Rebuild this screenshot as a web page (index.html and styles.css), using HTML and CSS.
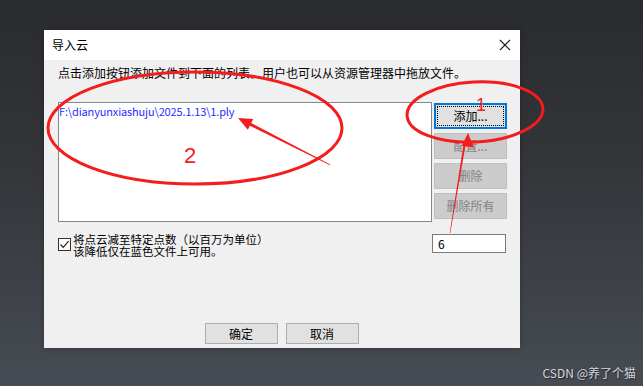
FILE: index.html
```html
<!DOCTYPE html>
<html lang="zh">
<head>
<meta charset="utf-8">
<title>导入云</title>
<link rel="stylesheet" href="styles.css">
</head>
<body>
<div class="page">
  <div class="dialog">
    <div class="titlebar">
      <span class="title">导入云</span>
      <svg class="close" width="12" height="12" viewBox="0 0 12 12"><path d="M1 1L11 11M11 1L1 11" stroke="#1a1a1a" stroke-width="1.1" fill="none"/></svg>
    </div>
    <div class="body">
      <p class="hint">点击添加按钮添加文件到下面的列表。用户也可以从资源管理器中拖放文件。</p>
      <div class="main">
        <div class="list"><div class="item">F:\dianyunxiashuju\2025.1.13\1.ply</div></div>
        <div class="btns">
          <div class="btn focus"><span>添加...</span></div>
          <div class="btn disabled">配置...</div>
          <div class="btn disabled">删除</div>
          <div class="btn disabled">删除所有</div>
        </div>
      </div>
      <div class="reduce">
        <div class="chk">
          <span class="box"><svg width="11" height="11" viewBox="0 0 11 11"><path d="M1.5 5.5L4.2 8.3L9.6 2.2" stroke="#222" stroke-width="1.2" fill="none"/></svg></span>
          <span class="txt"><span class="ln">将点云减至特定点数（以百万为单位）</span><span class="ln">该降低仅在蓝色文件上可用。</span></span>
        </div>
        <div class="num">6</div>
      </div>
      <div class="footer">
        <div class="btn normal">确定</div>
        <div class="btn normal">取消</div>
      </div>
    </div>
  </div>
  <div class="watermark">CSDN @养了个猫</div>
  <svg class="annot" width="643" height="386" viewBox="0 0 643 386">
    <ellipse cx="195" cy="128" rx="147" ry="56" fill="none" stroke="#f41c1c" stroke-width="3"/>
    <ellipse cx="475" cy="112" rx="68" ry="30" fill="none" stroke="#f41c1c" stroke-width="3" transform="rotate(-3 475 112)"/>
    <polygon points="238,118 247.8,129.8 249.8,125.8 330,165.2 330.3,164.6 251.2,123 253.2,119" fill="#f41c1c"/>
    <polygon points="468,133 461.9,145.5 465.3,146.2 450.3,233 449.7,233 463.3,145.9 473.8,147.4" fill="#f41c1c"/>
    <text x="476" y="111" class="num1">1</text>
    <text x="184" y="163" class="num2">2</text>
  </svg>
</div>
</body>
</html>
```

FILE: styles.css
```css
* { box-sizing: border-box; }
html, body { margin: 0; padding: 0; }
body {
  width: 643px;
  height: 386px;
  overflow: hidden;
  background: linear-gradient(180deg, #2a2b2e 0%, #34363a 45%, #474c54 100%);
  font-family: "Noto Sans CJK SC", "Noto Sans", sans-serif;
  font-size: 12px;
  color: #000;
}
.page {
  position: relative;
  width: 643px;
  height: 386px;
  padding: 30px 7px 0 44px;
  display: flex;
  flex-direction: column;
}
.dialog {
  width: 476px;
  height: 318px;
  display: flex;
  flex-direction: column;
  box-shadow: 0 0 6px rgba(0,0,0,0.25);
}
.titlebar {
  height: 30px;
  background: #fff;
  display: flex;
  align-items: center;
  justify-content: space-between;
  padding: 0 9px 0 8px;
}
.title { font-size: 12px; line-height: 14px; }
.close { display: block; }
.body {
  flex: 1;
  background: #f0f0f0;
  padding: 6px 13px 4px 14px;
  display: flex;
  flex-direction: column;
}
.hint { margin: 0; line-height: 14px; font-size: 12px; }
.main {
  margin-top: 22px;
  display: flex;
  gap: 2px;
}
.list {
  width: 374px;
  height: 120px;
  background: #fff;
  border: 1px solid #828790;
  padding: 0;
}
.item {
  color: #2a2aff;
  font-size: 11px;
  line-height: 16px;
  letter-spacing: -0.15px;
}
.btns {
  display: flex;
  flex-direction: column;
  gap: 4px;
  padding-top: 1px;
}
.btn {
  width: 73px;
  height: 26px;
  display: flex;
  align-items: center;
  justify-content: center;
  font-size: 12px;
  line-height: 14px;
}
.btn.focus {
  background: #e1e1e1;
  border: 2px solid #0078d7;
  padding: 1px;
}
.btn.focus span {
  flex: 1;
  align-self: stretch;
  display: flex;
  align-items: center;
  justify-content: center;
  border: 1px dotted #000;
}
.btn.disabled {
  background: #cccccc;
  border: 1px solid #bfbfbf;
  color: #838383;
}
.reduce {
  margin-top: 11px;
  display: flex;
  justify-content: space-between;
  padding-right: 1px;
}
.chk { display: flex; align-items: flex-start; }
.box {
  width: 13px;
  height: 13px;
  margin-top: 5px;
  margin-right: 2px;
  border: 1px solid #333;
  background: #fff;
  display: flex;
  align-items: center;
  justify-content: center;
}
.box svg { display: block; }
.txt { display: flex; flex-direction: column; }
.ln { display: block; height: 12px; font-size: 11.5px; line-height: 12px; white-space: nowrap; }
.num {
  margin-top: 1px;
  width: 74px;
  height: 19px;
  background: #fff;
  border: 1px solid #7a7a7a;
  padding-left: 5px;
  font-size: 12px;
  line-height: 17px;
}
.footer {
  margin-top: auto;
  margin-right: 2px;
  display: flex;
  justify-content: center;
  gap: 8px;
}
.btn.normal {
  width: 73px;
  height: 21px;
  background: #e1e1e1;
  border: 1px solid #adadad;
}
.watermark {
  margin-top: 18px;
  align-self: flex-end;
  color: #d4d6da;
  font-size: 12px;
  line-height: 14px;
  text-shadow: 1px 1px 1px rgba(0,0,0,0.5);
}
.annot {
  position: absolute;
  left: 0;
  top: 0;
  pointer-events: none;
}
.num1 { fill: #f41c1c; font-family: "Liberation Sans", sans-serif; font-size: 18px; }
.num2 { fill: #f41c1c; font-family: "Liberation Sans", sans-serif; font-size: 22px; }
```
